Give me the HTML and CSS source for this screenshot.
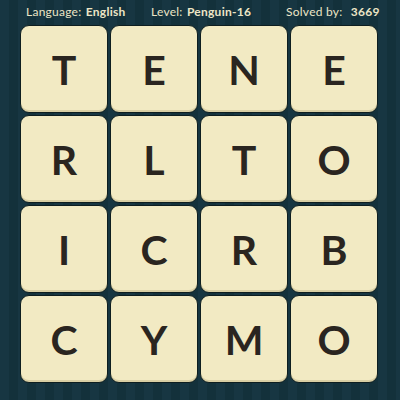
FILE: index.html
```
<!DOCTYPE html>
<html>
<head>
<meta charset="utf-8">
<link rel="stylesheet" href="styles.css">
</head>
<body>
<div class="page">
  <div class="header">
    <span class="item lang">Language: <b>English</b></span>
    <span class="item level">Level: <b>Penguin-16</b></span>
    <span class="item solved">Solved by: <b>3669</b></span>
  </div>
  <div class="grid">
    <div class="tile">T</div>
    <div class="tile">E</div>
    <div class="tile">N</div>
    <div class="tile">E</div>
    <div class="tile">R</div>
    <div class="tile">L</div>
    <div class="tile">T</div>
    <div class="tile">O</div>
    <div class="tile">I</div>
    <div class="tile">C</div>
    <div class="tile">R</div>
    <div class="tile">B</div>
    <div class="tile">C</div>
    <div class="tile">Y</div>
    <div class="tile">M</div>
    <div class="tile">O</div>
  </div>
</div>
</body>
</html>
```
FILE: styles.css
```
html, body {
  margin: 0;
  padding: 0;
}
body {
  width: 400px;
  height: 400px;
  overflow: hidden;
  background-color: #163440;
  background-image: repeating-linear-gradient(90deg, #173642 0px, #173642 9px, #13313b 9px, #13313b 18px);
  font-family: Lato, "Open Sans", sans-serif;
}
.page {
  display: flex;
  flex-direction: column;
}
.header {
  height: 23px;
  display: flex;
  align-items: center;
  padding: 0 0 0 26px;
  color: #ece5c6;
  font-size: 12px;
  letter-spacing: 0.25px;
  white-space: nowrap;
}
.item {
  white-space: nowrap;
  flex: none;
}
.lang {
  width: 125px;
}
.level {
  width: 135px;
}
.header b {
  font-weight: 700;
  margin-left: 1px;
}
.solved b {
  margin-left: 5px;
}
.grid {
  margin-top: 2px;
  margin-left: 20px;
  display: grid;
  grid-template-columns: repeat(4, 88px);
  grid-template-rows: repeat(4, 88px);
  gap: 2px;
}
.tile {
  box-sizing: border-box;
  background: #f2eac3;
  border: 1.5px solid #0e1e20;
  border-radius: 9px;
  box-shadow: inset 0 -2px 0 #d9cfa4;
  display: flex;
  align-items: center;
  justify-content: center;
  color: #2a2520;
  font-size: 41px;
  font-weight: 700;
  line-height: 1;
}
```
